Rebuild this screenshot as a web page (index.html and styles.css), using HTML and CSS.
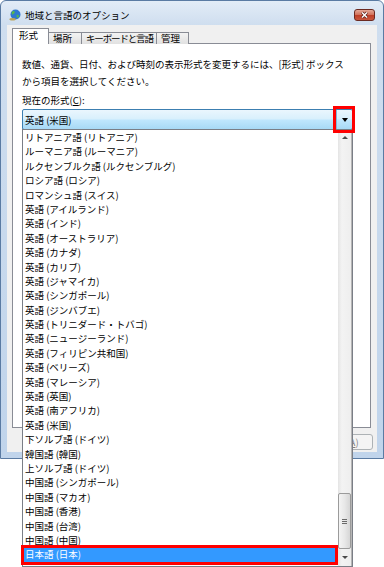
FILE: index.html
```html
<!DOCTYPE html>
<html lang="ja">
<head>
    <meta charset="UTF-8">
    <meta name="viewport" content="width=device-width, initial-scale=1.0">
    <title>地域と言語のオプション</title>
    <link rel="stylesheet" href="styles.css">
</head>
<body>
    <div class="window">
        <div class="titlebar">
            <svg class="app-icon" viewBox="0 0 12 12">
                <circle cx="6.5" cy="5.5" r="5" fill="#2f78cf"/>
                <path d="M3.5 2.2 C5 1.5 6.3 2.6 5.6 4 C5 4.9 4 4.6 3.7 5.8 C2.6 5.4 2.2 3.4 3.5 2.2Z" fill="#55b947"/>
                <path d="M7.6 5.8 C9 5.4 10.4 6.2 9.8 7.8 C9.2 9 7.8 8.9 7.6 8 Z" fill="#55b947"/>
                <ellipse cx="3.6" cy="10.3" rx="3.2" ry="1.3" fill="#b9a35a"/>
            </svg>
            <span class="title">地域と言語のオプション</span>
            <div class="close-btn">
                <svg viewBox="0 0 21 12">
                    <path d="M7.5 3 L13.5 9 M13.5 3 L7.5 9" stroke="#5a1d14" stroke-width="3.4"/>
                    <path d="M7.5 3 L13.5 9 M13.5 3 L7.5 9" stroke="#fff" stroke-width="1.8"/>
                </svg>
            </div>
        </div>

        <div class="client">
            <div class="tabs">
                <div class="tab active">形式</div>
                <div class="tab place">場所</div>
                <div class="tab keyboard">キーボードと言語</div>
                <div class="tab admin">管理</div>
            </div>

            <div class="panel">
                <p class="desc">数値、通貨、日付、および時刻の表示形式を変更するには、[形式] ボックス<br>から項目を選択してください。</p>
                <p class="label">現在の形式(<u>C</u>):</p>

                <div class="combo-wrap">
                    <div class="combo">
                        <span class="combo-text">英語 (米国)</span>
                        <span class="combo-btn"><span class="arrow-down"></span></span>
                    </div>
                    <div class="mark mark-btn"></div>

                    <div class="dropdown">
                        <ul class="items">
                            <li>リトアニア語 (リトアニア)</li>
                            <li>ルーマニア語 (ルーマニア)</li>
                            <li>ルクセンブルク語 (ルクセンブルグ)</li>
                            <li>ロシア語 (ロシア)</li>
                            <li>ロマンシュ語 (スイス)</li>
                            <li>英語 (アイルランド)</li>
                            <li>英語 (インド)</li>
                            <li>英語 (オーストラリア)</li>
                            <li>英語 (カナダ)</li>
                            <li>英語 (カリブ)</li>
                            <li>英語 (ジャマイカ)</li>
                            <li>英語 (シンガポール)</li>
                            <li>英語 (ジンバブエ)</li>
                            <li>英語 (トリニダード・トバゴ)</li>
                            <li>英語 (ニュージーランド)</li>
                            <li>英語 (フィリピン共和国)</li>
                            <li>英語 (ベリーズ)</li>
                            <li>英語 (マレーシア)</li>
                            <li>英語 (英国)</li>
                            <li>英語 (南アフリカ)</li>
                            <li>英語 (米国)</li>
                            <li>下ソルブ語 (ドイツ)</li>
                            <li>韓国語 (韓国)</li>
                            <li>上ソルブ語 (ドイツ)</li>
                            <li>中国語 (シンガポール)</li>
                            <li>中国語 (マカオ)</li>
                            <li>中国語 (香港)</li>
                            <li>中国語 (台湾)</li>
                            <li>中国語 (中国)</li>
                            <li class="selected">日本語 (日本)<span class="mark mark-row"></span></li>
                        </ul>
                        <div class="scrollbar">
                            <div class="sb-btn up"><span class="arrow-up small"></span></div>
                            <div class="sb-track">
                                <div class="sb-thumb"><span class="grip"></span></div>
                            </div>
                            <div class="sb-btn down"><span class="arrow-down small"></span></div>
                        </div>
                    </div>
                </div>
            </div>

            <div class="buttons">
                <button>OK</button>
                <button>キャンセル</button>
                <button disabled>適用(<u>A</u>)</button>
            </div>
        </div>
    </div>
</body>
</html>
```

FILE: styles.css
```css
* {
    margin: 0;
    padding: 0;
    box-sizing: border-box;
}

html, body {
    height: 567px;
}

body {
    font-family: "Noto Sans CJK JP", "Noto Sans", sans-serif;
    font-size: 9.5px;
    color: #000;
    background: #fff;
}

/* window frame */
.window {
    width: 384px;
    height: 459px;
    display: flex;
    flex-direction: column;
    border: 1px solid #5a7ba3;
    border-radius: 6px 6px 0 0;
    background: linear-gradient(180deg, #e2ecf7 0%, #cfdeef 24px, #c0d4eb 100%);
}

.titlebar {
    height: 24px;
    display: flex;
    align-items: center;
    padding: 3px 8px 0 8px;
}

.app-icon {
    width: 12px;
    height: 12px;
    margin-right: 4px;
}

.close-btn {
    margin-left: auto;
    align-self: flex-start;
    margin-top: 5px;
    width: 21px;
    height: 12px;
    border: 1px solid #6b2a21;
    border-radius: 3px;
    background: linear-gradient(180deg, #e5a897 0%, #d2755f 45%, #bf3f27 55%, #c8583f 100%);
}

.close-btn svg {
    display: block;
    width: 19px;
    height: 10px;
}

.client {
    flex: 1;
    margin: 0 6px 6px;
    background: #f0f0f0;
    padding: 3px 6px 0 5px;
    display: flex;
    flex-direction: column;
}

/* tabs */
.tabs {
    display: flex;
    align-items: flex-end;
    height: 16px;
    margin-bottom: -1px;
    position: relative;
    z-index: 1;
}

.tab {
    height: 12px;
    line-height: 11px;
    padding-left: 4px;
    border: 1px solid #898c95;
    border-bottom: none;
    margin-left: -1px;
    background: linear-gradient(180deg, #f3f3f3, #e1e1e1);
    white-space: nowrap;
    overflow: hidden;
}

.tab.active {
    height: 16px;
    line-height: 12px;
    padding-left: 6px;
    width: 37px;
    margin-left: 0;
    background: #fff;
}

.tab.place { width: 34px; }
.tab.keyboard { width: 76px; letter-spacing: -1.15px; }
.tab.admin { width: 33px; }

.panel {
    width: 359px;
    height: 385px;
    border: 1px solid #898c95;
    background: #fff;
    padding: 12px 10px 0 9px;
}

.desc {
    line-height: 17px;
}

.label {
    line-height: 16px;
    margin-top: 2px;
}

/* combo box */
.combo-wrap {
    position: relative;
    margin-top: 1px;
    width: 331px;
}

.combo {
    height: 21px;
    border: 1px solid #3c7fb1;
    border-radius: 2px;
    background: linear-gradient(180deg, #eaf6fd 0%, #d9f0fc 45%, #bee6fd 55%, #a7d9f5 100%);
    display: flex;
    align-items: center;
}

.combo-text {
    padding-left: 2px;
}

.combo-btn {
    margin-left: auto;
    width: 16px;
    height: 100%;
    border-left: 1px solid #7fb8dc;
    display: flex;
    align-items: center;
    justify-content: center;
}

.arrow-down {
    width: 0;
    height: 0;
    border-left: 3px solid transparent;
    border-right: 3px solid transparent;
    border-top: 4px solid #000;
}

.arrow-up {
    width: 0;
    height: 0;
    border-left: 3px solid transparent;
    border-right: 3px solid transparent;
    border-bottom: 4px solid #000;
}

.arrow-down.small { border-top: 3px solid #4a4a4a; }
.arrow-up.small { border-bottom: 3px solid #4a4a4a; }

/* red annotations */
.mark {
    position: absolute;
    border: 3px solid #f00;
    z-index: 6;
}

.mark-btn {
    left: 311px;
    top: -3px;
    width: 22px;
    height: 27px;
}

.mark-row {
    left: -2px;
    right: 0;
    top: -2px;
    bottom: -3px;
}

/* dropdown list */
.dropdown {
    position: absolute;
    top: 20px;
    left: 0;
    width: 331px;
    height: 438px;
    border: 1px solid #7a7e86;
    background: #fff;
    display: flex;
    z-index: 5;
}

.items {
    flex: 1;
    list-style: none;
}

.items li {
    position: relative;
    height: 14.4px;
    line-height: 14.4px;
    padding-left: 2px;
    white-space: nowrap;
}

.items li.selected {
    background: #3399ff;
    color: #fff;
}

.scrollbar {
    width: 14px;
    display: flex;
    flex-direction: column;
    background: linear-gradient(90deg, #e4e4e4 0%, #f3f3f3 30%, #eeeeee 100%);
    border-right: 1px solid #b5b5b5;
}

.sb-btn {
    height: 15px;
    display: flex;
    align-items: center;
    justify-content: center;
}

.sb-btn.down {
    height: 17px;
}

.sb-track {
    flex: 1;
    display: flex;
    flex-direction: column;
}

.sb-thumb {
    margin-top: auto;
    height: 56px;
    border: 1px solid #9b9b9b;
    border-radius: 2px;
    background: linear-gradient(90deg, #f4f4f4 0%, #e8e8e8 50%, #d6d6d6 100%);
    display: flex;
    align-items: center;
    justify-content: center;
}

.grip {
    width: 5px;
    height: 5px;
    background: repeating-linear-gradient(180deg, #6a6a6a 0 1px, transparent 1px 2px);
}

/* dialog buttons */
.buttons {
    display: flex;
    justify-content: flex-end;
    gap: 6px;
    margin-top: 6px;
    margin-right: -2px;
}

button {
    font: inherit;
    width: 60px;
    height: 16px;
    border: 1px solid #707070;
    border-radius: 3px;
    background: linear-gradient(180deg, #f2f2f2 0%, #ebebeb 50%, #dddddd 50%, #cfcfcf 100%);
}

button:disabled {
    border-color: #adb2b5;
    color: #838383;
    background: #f4f4f4;
}
```
